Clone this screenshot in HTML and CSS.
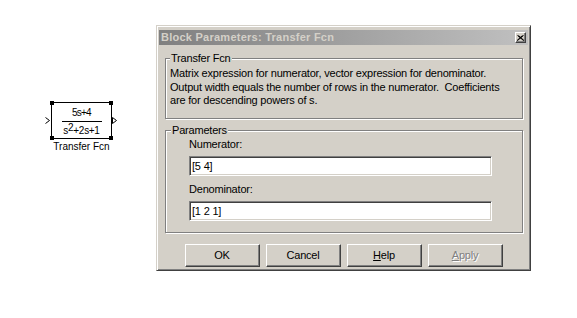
FILE: index.html
```html
<!doctype html>
<html>
<head>
	<meta charset='utf-8' />
	<title>Block Parameters: Transfer Fcn</title>
	<link rel="stylesheet" href="styles.css">
</head>

<body>
	<div class='desk'>
		<!--simulink canvas-->
		<div class='canvas'>
			<div class='block'>
				<div class='tf'>
					<span class='hd tl'></span><span class='hd tr'></span>
					<span class='hd bl'></span><span class='hd br'></span>
					<svg class='port pin' width='5' height='7' viewBox='0 0 5 7'>
						<polyline points='0.5,0.5 4.5,3.5 0.5,6.5' fill='none' stroke='#000' stroke-width='1' />
					</svg>
					<svg class='port pout' width='5' height='7' viewBox='0 0 5 7'>
						<polygon points='0.5,0.5 4.5,3.5 0.5,6.5' fill='#fff' stroke='#000' stroke-width='1' />
					</svg>
					<div class='num'>5s+4</div>
					<div class='bar'></div>
					<div class='den'>s<span class='sup'>2</span>+2s+1</div>
				</div>
				<div class='name'>Transfer Fcn</div>
			</div>
		</div>

		<!--dialog-->
		<div class='dlg'>
			<div class='cap'>
				<span class='ttl'>Block Parameters: Transfer Fcn</span>
				<span class='x'>
					<svg width='7' height='6' viewBox='0 0 7 6'>
						<path d='M0.5 0.5 L6.5 5.5 M6.5 0.5 L0.5 5.5 M1.5 0.5 L7 5.5 M5.5 0.5 L0 5.5' stroke='#000' stroke-width='1' fill='none' />
					</svg>
				</span>
			</div>
			<fieldset class='grp g1'>
				<legend>Transfer Fcn</legend>
				<p>Matrix expression for numerator, vector expression for denominator.<br>Output width equals the number of rows in the numerator.&nbsp; Coefficients<br>are for descending powers of s.</p>
			</fieldset>
			<fieldset class='grp g2'>
				<legend>Parameters</legend>
				<div class='fld'>
					<div class='lbl'>Numerator:</div>
					<div class='inp'>[5 4]</div>
					<div class='lbl lbl2'>Denominator:</div>
					<div class='inp'>[1 2 1]</div>
				</div>
			</fieldset>
			<div class='btns'>
				<div class='btn'>OK</div>
				<div class='btn'>Cancel</div>
				<div class='btn'><span><u>H</u>elp</span></div>
				<div class='btn off'><span><u>A</u>pply</span></div>
			</div>
		</div>
	</div>
</body>
</html>
```

FILE: styles.css
```css
/*reset*/
body{margin:0;background:#fff;font-family:"Liberation Sans",Arial,sans-serif;color:#000;}
p{margin:0;}
/*page*/
.desk{display:flex;align-items:flex-start;width:577px;height:318px;}
.canvas{width:156px;flex:none;box-sizing:border-box;padding:102px 0 0 51px;}
/*block*/
.block{width:61px;display:flex;flex-direction:column;align-items:center;}
.tf{position:relative;box-sizing:border-box;width:61px;height:37px;border:1px solid #000;display:flex;flex-direction:column;align-items:center;padding-top:4px;font-size:10px;line-height:11px;}
.num{height:11px;letter-spacing:-0.8px;}
.bar{width:40px;height:1px;background:#000;margin-top:3px;}
.den{margin-top:3px;white-space:nowrap;letter-spacing:-0.3px;}
.sup{position:relative;top:-3px;}
.hd{position:absolute;width:4px;height:4px;background:#000;}
.tl{left:-2px;top:-2px;}
.tr{right:-2px;top:-2px;}
.bl{left:-2px;bottom:-2px;}
.br{right:-2px;bottom:-2px;}
.port{position:absolute;top:14px;}
.pin{left:-7px;}
.pout{left:60px;}
.name{font-size:10px;line-height:12px;margin-top:2px;white-space:nowrap;}
/*dialog*/
.dlg{margin-top:25px;width:375px;height:246px;flex:none;box-sizing:border-box;background:#d4d0c8;border:1px solid;border-color:#d4d0c8 #404040 #404040 #d4d0c8;box-shadow:inset 1px 1px #fff,inset -1px -1px #808080;padding:2px;font-size:11px;letter-spacing:-0.2px;display:flex;flex-direction:column;}
.cap{height:15px;margin-top:2px;display:flex;align-items:center;justify-content:space-between;padding:0 2px;background:linear-gradient(to right,#808080,#c0c0c0);color:#d4d0c8;font-weight:bold;line-height:15px;}
.ttl{letter-spacing:0.25px;}
.x{width:11px;height:11px;box-sizing:border-box;background:#d4d0c8;border:1px solid;border-color:#fff #404040 #404040 #fff;box-shadow:inset -1px -1px #808080;display:flex;align-items:center;justify-content:center;}
.x svg{display:block;}
.grp{margin:7px 5px 0 6px;padding:2px 4px 10px;border:1px solid #808080;box-shadow:inset 1px 1px #fff,1px 1px #fff;min-width:0;}
.grp legend{padding:0 1px;line-height:13px;background:#d4d0c8;}
.g1 p{line-height:13.5px;white-space:nowrap;}
.g2{margin-top:5px;padding:0 4px 11px;}
.g2 legend{margin-left:1px;}
.fld{margin-left:19px;}
.lbl{line-height:14px;}
.lbl2{margin-top:6px;}
.inp{width:303px;height:20px;box-sizing:border-box;margin-top:5px;background:#fff;border:1px solid;border-color:#808080 #fff #fff #808080;box-shadow:inset 1px 1px #404040,inset -1px -1px #d4d0c8;padding-left:2px;line-height:18px;}
/*buttons*/
.btns{display:flex;justify-content:center;gap:6px;margin-top:11px;}
.btn{width:75px;height:23px;box-sizing:border-box;border:1px solid;border-color:#fff #404040 #404040 #fff;box-shadow:inset -1px -1px #808080;display:flex;align-items:center;justify-content:center;}
.off{color:#808080;text-shadow:1px 1px #fff;}
```
